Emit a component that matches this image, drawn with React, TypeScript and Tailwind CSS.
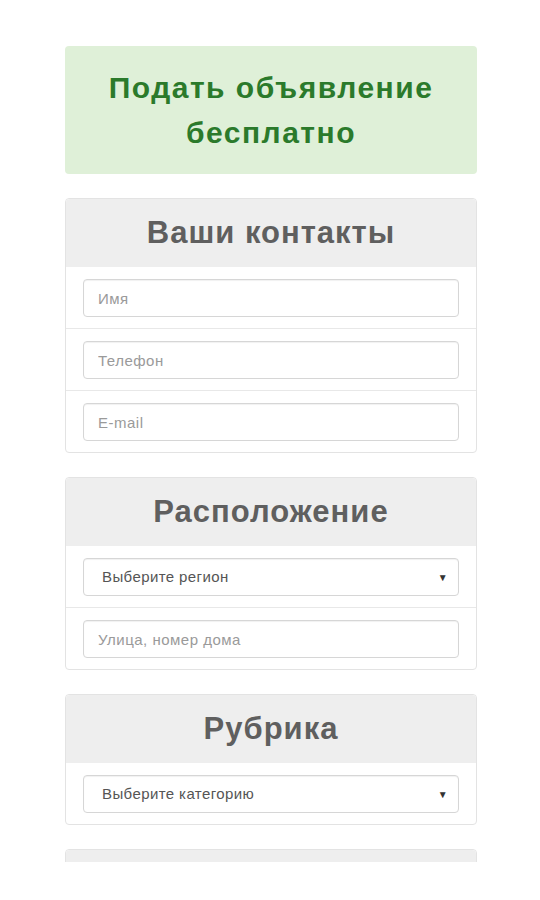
const font = { fontFamily: '"Liberation Sans", Arial, sans-serif' };

function Panel({ title, children }: { title?: string; children?: React.ReactNode }) {
  return (
    <div className="rounded border border-[#e3e3e3] bg-white">
      <div className="flex h-[68px] items-center justify-center rounded-t bg-[#eeeeee]">
        {title && <h2 className="text-[31px] font-bold tracking-[1px] text-[#5f5f5f]">{title}</h2>}
      </div>
      {children}
    </div>
  );
}

function Row({ children, last }: { children: React.ReactNode; last?: boolean }) {
  return (
    <div className={"px-[17px] pt-[12px] pb-[11px] " + (last ? "" : "border-b border-[#e8e8e8]")}>
      {children}
    </div>
  );
}

function Field({ placeholder }: { placeholder: string }) {
  return (
    <input
      placeholder={placeholder}
      className="block h-[38px] w-full rounded border border-[#d6d6d6] bg-white px-[14px] text-[15px] tracking-[0.5px] text-[#555] shadow-[inset_0_1px_1px_rgba(0,0,0,0.06)] outline-none placeholder:text-[#9a9a9a]"
      style={font}
    />
  );
}

function Select({ label }: { label: string }) {
  return (
    <div className="flex h-[38px] w-full items-center justify-between rounded border border-[#d6d6d6] bg-white pl-[18px] pr-[10px] text-[15px] tracking-[0.4px] text-[#555] shadow-[inset_0_1px_1px_rgba(0,0,0,0.06)]">
      <span>{label}</span>
      <span className="text-[10px] text-[#333]">▼</span>
    </div>
  );
}

export default function App() {
  return (
    <div className="h-[862px] overflow-hidden bg-white" style={font}>
      <div className="ml-[65px] flex w-[412px] flex-col gap-6 pt-[46px]">
        <div className="flex h-[128px] items-center justify-center rounded bg-[#dff0d8] text-center">
          <h1 className="text-[30px] font-bold leading-[45px] tracking-[1.5px] text-[#2b7a2b]">
            Подать объявление
            <br />
            бесплатно
          </h1>
        </div>

        <Panel title="Ваши контакты">
          <Row>
            <Field placeholder="Имя" />
          </Row>
          <Row>
            <Field placeholder="Телефон" />
          </Row>
          <Row last>
            <Field placeholder="E-mail" />
          </Row>
        </Panel>

        <Panel title="Расположение">
          <Row>
            <Select label="Выберите регион" />
          </Row>
          <Row last>
            <Field placeholder="Улица, номер дома" />
          </Row>
        </Panel>

        <Panel title="Рубрика">
          <Row last>
            <Select label="Выберите категорию" />
          </Row>
        </Panel>

        <Panel />
      </div>
    </div>
  );
}
